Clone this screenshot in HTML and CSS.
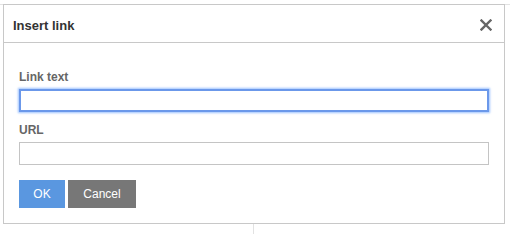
FILE: index.html
```html
<!DOCTYPE html>
<html>
<head>
<meta charset="utf-8">
<link rel="stylesheet" href="styles.css">
</head>
<body>
<div class="backdrop"><div class="backdrop-col"></div></div>
<div class="dialog">
  <div class="dialog-header">
    <div class="dialog-title">Insert link</div>
    <span class="close" aria-label="Close">
      <svg width="12" height="12" viewBox="0 0 12 12"><path d="M1.5 1.5 L10.5 10.5 M10.5 1.5 L1.5 10.5" stroke="#666" stroke-width="2.4" stroke-linecap="square" fill="none"/></svg>
    </span>
  </div>
  <div class="dialog-body">
    <div class="field">
      <label class="field-label">Link text</label>
      <div class="input input-focus"></div>
    </div>
    <div class="field">
      <label class="field-label">URL</label>
      <div class="input"></div>
    </div>
    <div class="actions">
      <button class="btn btn-ok">OK</button>
      <button class="btn btn-cancel">Cancel</button>
    </div>
  </div>
</div>
</body>
</html>
```
FILE: styles.css
```css
html, body {
  margin: 0;
  padding: 0;
  background: #fff;
  font-family: "Liberation Sans", Arial, sans-serif;
}
body {
  position: relative;
  width: 510px;
  height: 234px;
  overflow: hidden;
}
.backdrop {
  position: absolute;
  left: 0;
  top: 4px;
  width: 510px;
  height: 230px;
  border-top: 1px solid #e2e2e2;
}
.backdrop-col {
  position: absolute;
  left: 253px;
  top: 0;
  width: 1px;
  height: 230px;
  background: #e2e2e2;
}
.dialog {
  position: relative;
  margin: 4px 0 0 3px;
  width: 502px;
  box-sizing: border-box;
  border: 1px solid #c8c8c8;
  background: #fff;
}
.dialog-header {
  height: 38px;
  box-sizing: border-box;
  border-bottom: 1px solid #c8c8c8;
  display: flex;
  justify-content: space-between;
  align-items: flex-start;
  padding: 13px 12px 0 9px;
}
.dialog-title {
  font-size: 13px;
  line-height: 15px;
  font-weight: bold;
  color: #333;
}
.close {
  display: block;
  width: 12px;
  height: 12px;
  margin-top: 1px;
}
.close svg {
  display: block;
}
.dialog-body {
  padding: 27px 15px 15px;
}
.field + .field {
  margin-top: 11px;
}
.field-label {
  display: block;
  font-size: 12px;
  line-height: 14px;
  font-weight: bold;
  color: #666;
  margin-bottom: 5px;
}
.input {
  height: 23px;
  box-sizing: border-box;
  border: 1px solid #c4c4c4;
  background: #fff;
}
.input-focus {
  border: 2px solid #6b98ea;
  box-shadow: 0 0 2px 1px rgba(77, 144, 254, 0.55);
}
.actions {
  margin-top: 15px;
  display: flex;
  gap: 3px;
}
.btn {
  height: 28px;
  border: none;
  margin: 0;
  padding: 0;
  font-family: "Liberation Sans", Arial, sans-serif;
  font-size: 12px;
  color: #fff;
  cursor: pointer;
}
.btn-ok {
  width: 46px;
  background: #5a97e0;
}
.btn-cancel {
  width: 68px;
  background: #777;
}
```
